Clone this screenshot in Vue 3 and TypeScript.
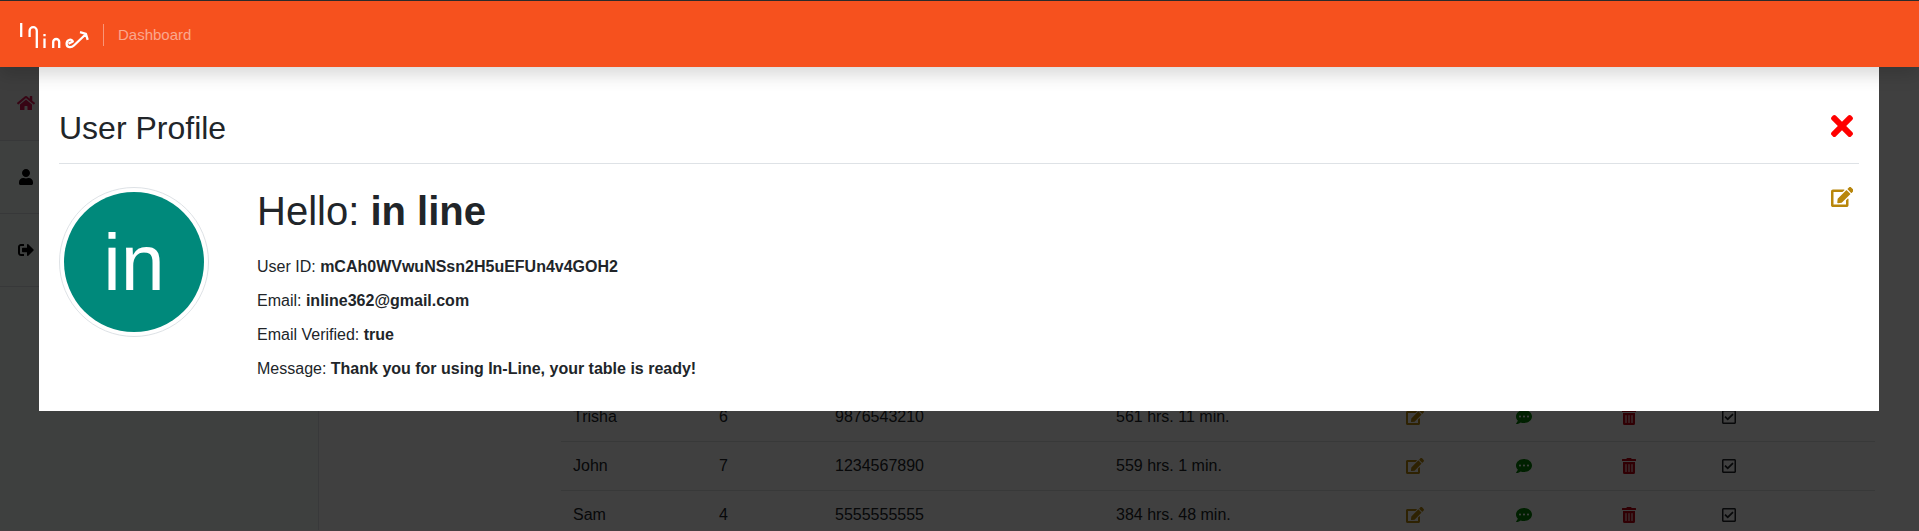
<script setup lang="ts">
interface Guest {
  name: string
  size: number
  phone: string
  wait: string
}

const guests: Guest[] = [
  { name: 'Trisha', size: 6, phone: '9876543210', wait: '561 hrs. 11 min.' },
  { name: 'John', size: 7, phone: '1234567890', wait: '559 hrs. 1 min.' },
  { name: 'Sam', size: 4, phone: '5555555555', wait: '384 hrs. 48 min.' },
]

const details: { label: string; value: string }[] = [
  { label: 'User ID', value: 'mCAh0WVwuNSsn2H5uEFUn4v4GOH2' },
  { label: 'Email', value: 'inline362@gmail.com' },
  { label: 'Email Verified', value: 'true' },
  { label: 'Message', value: 'Thank you for using In-Line, your table is ready!' },
]

const icons = {
  home: 'M280.37 148.26L96 300.11V464a16 16 0 0 0 16 16l112.06-.29a16 16 0 0 0 15.92-16V368a16 16 0 0 1 16-16h64a16 16 0 0 1 16 16v95.64a16 16 0 0 0 16 16.05L464 480a16 16 0 0 0 16-16V300L295.67 148.26a12.19 12.19 0 0 0-15.3 0zM571.6 251.47L488 182.56V44.05a12 12 0 0 0-12-12h-56a12 12 0 0 0-12 12v72.61L318.47 43a48 48 0 0 0-61 0L4.34 251.47a12 12 0 0 0-1.6 16.9l25.5 31A12 12 0 0 0 45.15 301l235.22-193.74a12.19 12.19 0 0 1 15.3 0L530.9 301a12 12 0 0 0 16.9-1.6l25.5-31a12 12 0 0 0-1.7-16.93z',
  user: 'M224 256c70.7 0 128-57.3 128-128S294.7 0 224 0 96 57.3 96 128s57.3 128 128 128zm89.6 32h-16.7c-22.2 10.2-46.9 16-72.9 16s-50.6-5.8-72.9-16h-16.7C60.2 288 0 348.2 0 422.4V464c0 26.5 21.5 48 48 48h352c26.5 0 48-21.5 48-48v-41.6c0-74.2-60.2-134.4-134.4-134.4z',
  signOut: 'M497 273L329 441c-15 15-41 4.5-41-17v-96H152c-13.3 0-24-10.7-24-24v-96c0-13.3 10.7-24 24-24h136V88c0-21.4 25.9-32 41-17l168 168c9.3 9.4 9.3 24.6 0 34zM192 436v-40c0-6.6-5.4-12-12-12H96c-17.7 0-32-14.3-32-32V160c0-17.7 14.3-32 32-32h84c6.6 0 12-5.4 12-12V76c0-6.6-5.4-12-12-12H96c-53 0-96 43-96 96v192c0 53 43 96 96 96h84c6.6 0 12-5.4 12-12z',
  edit: 'M402.6 83.2l90.2 90.2c3.8 3.8 3.8 10 0 13.8L274.4 405.6l-92.8 10.3c-12.4 1.4-22.9-9.1-21.5-21.5l10.3-92.8L388.8 83.2c3.8-3.8 10-3.8 13.8 0zm162-22.9l-48.8-48.8c-15.2-15.2-39.9-15.2-55.2 0l-35.4 35.4c-3.8 3.8-3.8 10 0 13.8l90.2 90.2c3.8 3.8 10 3.8 13.8 0l35.4-35.4c15.2-15.3 15.2-40 0-55.2zM384 346.2V448H64V128h229.8c3.2 0 6.2-1.3 8.5-3.5l40-40c7.6-7.6 2.2-20.5-8.5-20.5H48C21.5 64 0 85.5 0 112v352c0 26.5 21.5 48 48 48h352c26.5 0 48-21.5 48-48V306.2c0-10.7-12.9-16-20.5-8.5l-40 40c-2.2 2.3-3.5 5.3-3.5 8.5z',
  comment: 'M256 32C114.6 32 0 125.1 0 240c0 49.6 21.4 95 57 130.7C44.5 421.1 2.7 466 2.2 466.5c-2.2 2.3-2.8 5.7-1.5 8.7S4.8 480 8 480c66.3 0 116-31.8 140.6-51.4 32.7 12.3 69 19.4 107.4 19.4 141.4 0 256-93.1 256-208S397.4 32 256 32zM128 272c-17.7 0-32-14.3-32-32s14.3-32 32-32 32 14.3 32 32-14.3 32-32 32zm128 0c-17.7 0-32-14.3-32-32s14.3-32 32-32 32 14.3 32 32-14.3 32-32 32zm128 0c-17.7 0-32-14.3-32-32s14.3-32 32-32 32 14.3 32 32-14.3 32-32 32z',
  trash: 'M32 464a48 48 0 0 0 48 48h288a48 48 0 0 0 48-48V128H32zm272-256a16 16 0 0 1 32 0v224a16 16 0 0 1-32 0zm-96 0a16 16 0 0 1 32 0v224a16 16 0 0 1-32 0zm-96 0a16 16 0 0 1 32 0v224a16 16 0 0 1-32 0zM432 32H312l-9.4-18.7A24 24 0 0 0 281.1 0H166.8a23.72 23.72 0 0 0-21.4 13.3L136 32H16A16 16 0 0 0 0 48v32a16 16 0 0 0 16 16h416a16 16 0 0 0 16-16V48a16 16 0 0 0-16-16z',
  check: 'M400 32H48C21.49 32 0 53.49 0 80v352c0 26.51 21.49 48 48 48h352c26.51 0 48-21.49 48-48V80c0-26.51-21.49-48-48-48zm0 400H48V80h352v352zm-35.864-241.724L191.547 361.48c-4.705 4.667-12.303 4.637-16.97-.068l-90.781-91.516c-4.667-4.705-4.637-12.303.069-16.971l22.719-22.536c4.705-4.667 12.303-4.637 16.97.069l59.792 60.277 141.352-140.216c4.705-4.667 12.303-4.637 16.97.068l22.536 22.718c4.667 4.706 4.637 12.304-.068 16.971z',
  times: 'M242.72 256l100.07-100.07c12.28-12.28 12.28-32.19 0-44.48l-22.24-22.24c-12.28-12.28-32.19-12.28-44.48 0L176 189.28 75.93 89.21c-12.28-12.28-32.19-12.28-44.48 0L9.21 111.45c-12.28 12.28-12.28 32.19 0 44.48L109.28 256 9.21 356.07c-12.28 12.28-12.28 32.19 0 44.48l22.24 22.24c12.28 12.28 32.2 12.28 44.48 0L176 322.72l100.07 100.07c12.28 12.28 32.2 12.28 44.48 0l22.24-22.24c12.28-12.28 12.28-32.19 0-44.48L242.72 256z',
}
</script>

<template>
  <div class="page">
    <header class="navbar">
      <svg class="logo" width="70" height="28" viewBox="0 0 70 28" aria-label="In line">
        <g fill="none" stroke="#fff" stroke-width="2.3" stroke-linecap="butt" stroke-linejoin="round">
          <path d="M2.2 2v14" />
          <path d="M10.6 16V9.800a3.500 3.500 0 0 1 7.200 0V27" />
          <path d="M25.500 17.500V27M25.500 13v2.300" />
          <path d="M34.200 27v-6a3 3 0 0 1 6 0v6" />
          <path d="M49.500 22.800l4.300-2.300c-.6-3-6.200-2.200-6.200 2.200 0 4.300 4.800 4.300 7.300 1.800L67 13M61 11.200l5.900 1.600 1.800 6" />
        </g>
      </svg>
      <span class="separator"></span>
      <a class="nav-link">Dashboard</a>
    </header>

    <main class="body">
      <aside class="sidebar">
        <div class="side-item active"><svg width="18" height="16" viewBox="0 0 576 512"><path :d="icons.home" /></svg></div>
        <div class="side-item"><svg width="18" height="16" viewBox="0 0 448 512"><path :d="icons.user" /></svg></div>
        <div class="side-item"><svg width="18" height="16" viewBox="0 0 512 512"><path :d="icons.signOut" /></svg></div>
      </aside>
      <section class="guests">
        <div v-for="guest in guests" :key="guest.name" class="guest">
          <span>{{ guest.name }}</span>
          <span>{{ guest.size }}</span>
          <span>{{ guest.phone }}</span>
          <span>{{ guest.wait }}</span>
          <svg class="gold" width="18" height="16" viewBox="0 0 576 512"><path :d="icons.edit" /></svg>
          <svg class="green" width="16" height="16" viewBox="0 0 512 512"><path :d="icons.comment" /></svg>
          <svg class="red" width="14" height="16" viewBox="0 0 448 512"><path :d="icons.trash" /></svg>
          <svg class="dark" width="14" height="16" viewBox="0 0 448 512"><path :d="icons.check" /></svg>
        </div>
      </section>
    </main>

    <div class="backdrop"></div>

    <div class="modal">
      <div class="modal-head">
        <h2>User Profile</h2>
        <svg class="close" width="22" height="32" viewBox="0 0 352 512"><path :d="icons.times" /></svg>
      </div>
      <div class="profile">
        <div class="avatar"><div class="disc">in</div></div>
        <div class="info">
          <h1>Hello: <b>in line</b></h1>
          <p v-for="item in details" :key="item.label">{{ item.label }}: <b>{{ item.value }}</b></p>
        </div>
        <svg class="edit" width="22.5" height="20" viewBox="0 0 576 512"><path :d="icons.edit" /></svg>
      </div>
    </div>
  </div>
</template>

<style>
body {
  margin: 0;
  background: #fff;
}
</style>

<style scoped>
.page {
  position: relative;
  box-sizing: border-box;
  height: 531px;
  overflow: hidden;
  border-top: 1px solid #2b2b2b;
  border-bottom: 1px solid #453f42;
  color: #212529;
  font: 16px/24px "Liberation Sans", Arial, sans-serif;
}
svg {
  display: block;
}
.navbar {
  position: relative;
  z-index: 3;
  display: flex;
  align-items: center;
  height: 66px;
  padding-left: 19px;
  box-sizing: border-box;
  background: #f6511e;
  box-shadow: 0 8px 16px rgba(0, 0, 0, 0.15);
}
.logo {
  margin-top: 2px;
}
.separator {
  width: 1px;
  height: 22px;
  margin: 2px 14px 0;
  background: rgba(255, 255, 255, 0.4);
}
.nav-link {
  padding-top: 2px;
  font-size: 15px;
  color: rgba(255, 255, 255, 0.5);
}
.body {
  display: flex;
  height: 464px;
}
.sidebar {
  box-sizing: border-box;
  width: 319px;
  background: #f8fffc;
  border-right: 1px solid #dfe3e6;
}
.side-item {
  display: flex;
  align-items: center;
  box-sizing: border-box;
  height: 73px;
  padding: 0 0 1px 17px;
  border-bottom: 1px solid #dcdfe2;
}
.side-item.active {
  height: 74px;
  padding-bottom: 2px;
  background: #f4f1f3;
  fill: #dc1450;
}
.guests {
  width: 1314px;
  margin-left: 242px;
  padding-top: 326px;
}
.guest {
  display: grid;
  grid-template-columns: 146px 116px 281px 290px 110px 106px 100px 1fr;
  align-items: center;
  box-sizing: border-box;
  height: 49px;
  padding-left: 12px;
  border-bottom: 1px solid #e0e2e4;
}
.gold {
  fill: #b8860b;
}
.green {
  fill: #008000;
}
.red {
  fill: #c00010;
}
.dark {
  fill: #212529;
}
.backdrop {
  position: absolute;
  inset: 0;
  z-index: 1;
  background: rgba(0, 0, 0, 0.75);
}
.modal {
  position: absolute;
  z-index: 2;
  top: 66px;
  left: 39px;
  box-sizing: border-box;
  width: 1840px;
  height: 344px;
  padding: 0 20px;
  background: #fff;
}
.modal-head {
  display: flex;
  align-items: center;
  justify-content: space-between;
  box-sizing: border-box;
  height: 97px;
  padding: 22px 6px 0 0;
  border-bottom: 1px solid #dee2e6;
}
h1,
h2 {
  margin: 0;
  font-weight: 400;
}
h2 {
  padding-top: 3px;
  font-size: 32px;
  line-height: 38px;
}
.close {
  fill: #f00;
}
.profile {
  display: flex;
  padding: 23px 6px 0 0;
}
.avatar {
  box-sizing: border-box;
  width: 150px;
  height: 150px;
  padding: 4px;
  border: 1px solid #dee2e6;
  border-radius: 50%;
}
.disc {
  height: 140px;
  border-radius: 50%;
  background: #00897b;
  color: #fff;
  font: 79px/142px "Liberation Sans", Arial, sans-serif;
  text-align: center;
}
.info {
  flex: 1;
  margin-left: 48px;
}
h1 {
  margin-bottom: 20px;
  font-size: 40px;
  line-height: 48px;
}
p {
  margin: 0 0 10px;
}
.edit {
  fill: #b8860b;
}
</style>
